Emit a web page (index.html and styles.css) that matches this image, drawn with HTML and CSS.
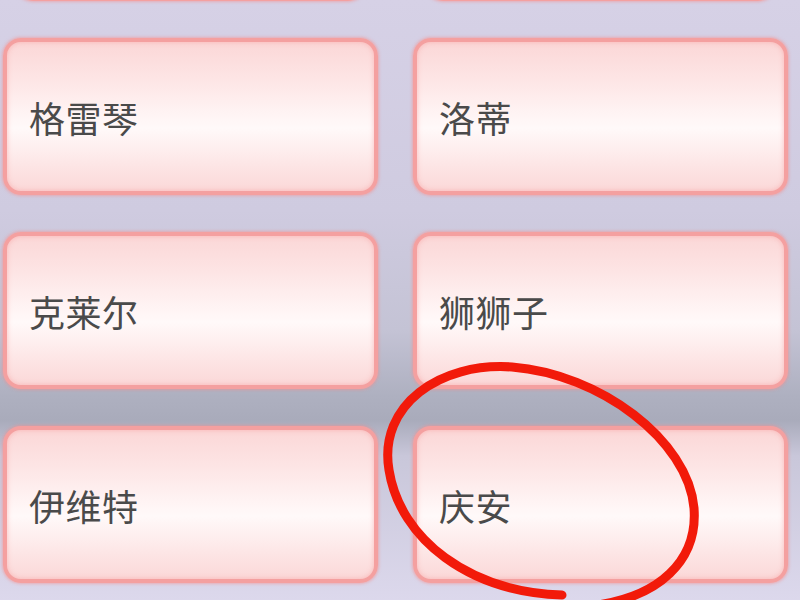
FILE: index.html
```html
<!DOCTYPE html>
<html lang="zh">
<head>
<meta charset="utf-8">
<title>角色列表</title>
<link rel="stylesheet" href="styles.css">
</head>
<body>
<div class="screen">
  <div class="grid">
    <div class="card card-top"></div>
    <div class="card card-top"></div>
    <div class="card"><span class="name">格雷琴</span></div>
    <div class="card"><span class="name">洛蒂</span></div>
    <div class="card"><span class="name">克莱尔</span></div>
    <div class="card"><span class="name">狮狮子</span></div>
    <div class="card"><span class="name">伊维特</span></div>
    <div class="card"><span class="name">庆安</span></div>
  </div>
  <svg class="mark" width="800" height="600" viewBox="0 0 800 600">
    <path d="M 562 595 C 470 592 400 540 389 470 C 378 405 440 362 512 367 C 600 374 688 440 694 508 C 698 560 660 598 590 606" fill="none" stroke="#f21a0a" stroke-width="9" stroke-linecap="round"/>
  </svg>
</div>
</body>
</html>
```
FILE: styles.css
```css
html, body {
  margin: 0;
  padding: 0;
}
body {
  width: 800px;
  height: 600px;
  overflow: hidden;
  font-family: "Noto Sans CJK SC", "Noto Sans", sans-serif;
}
.screen {
  position: relative;
  width: 800px;
  height: 600px;
  overflow: hidden;
  background: linear-gradient(to bottom, #d6d1e6 0%, #cfcbe0 35%, #c4c3d5 55%, #aeb0c0 66%, #a9abbb 70%, #c9c7da 76%, #dcd8ec 100%);
}
.grid {
  display: grid;
  grid-template-columns: 375px 375px;
  grid-auto-rows: 157px;
  column-gap: 35px;
  row-gap: 37px;
  padding-left: 3px;
  margin-top: -156px;
}
.card {
  box-sizing: border-box;
  border: 4px solid #f4a0a0;
  border-radius: 18px;
  box-shadow: 0 0 3px 1px rgba(245, 140, 140, 0.55), inset 0 0 5px rgba(250, 165, 165, 0.7);
  background: linear-gradient(to bottom, #fbd7d7 0%, #fde5e5 25%, #fff6f6 52%, #fff9f9 58%, #fde6e6 82%, #fbd8d8 100%);
  display: flex;
  align-items: center;
  padding-left: 22px;
}
.card-top {
  margin: 0 12px;
}
.name {
  font-size: 36px;
  font-weight: 400;
  color: #4a4a4a;
  letter-spacing: 0.5px;
}
.mark {
  position: absolute;
  left: 0;
  top: 0;
}
```
